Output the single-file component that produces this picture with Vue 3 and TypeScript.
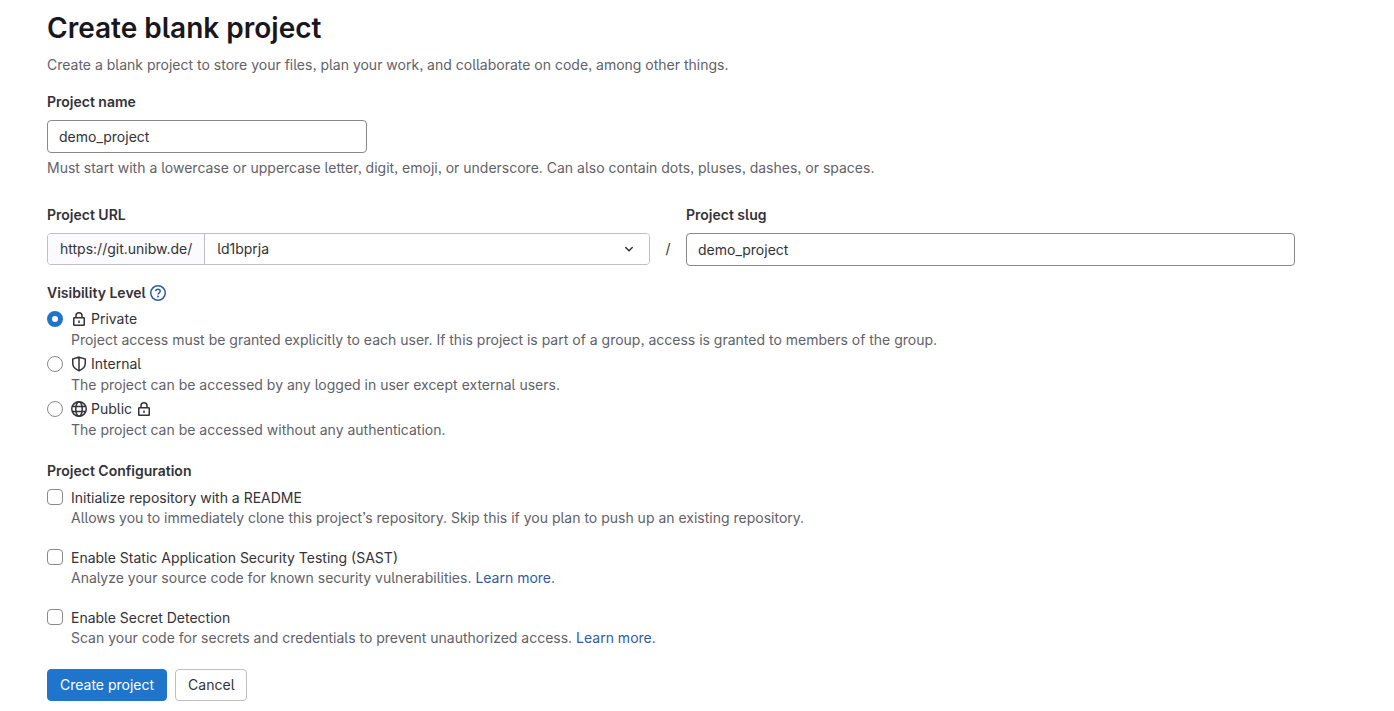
<script setup lang="ts">
import { ref } from 'vue'

interface VisibilityLevel {
  value: string
  label: string
  help: string
  locked: boolean
}

interface ConfigOption {
  id: string
  label: string
  help: string
  link: boolean
}

const projectName = ref('demo_project')
const projectSlug = ref('demo_project')
const namespace = ref('ld1bprja')
const visibility = ref('private')
const selectedOptions = ref<string[]>([])

const levels: VisibilityLevel[] = [
  {
    value: 'private',
    label: 'Private',
    help: 'Project access must be granted explicitly to each user. If this project is part of a group, access is granted to members of the group.',
    locked: false,
  },
  {
    value: 'internal',
    label: 'Internal',
    help: 'The project can be accessed by any logged in user except external users.',
    locked: false,
  },
  {
    value: 'public',
    label: 'Public',
    help: 'The project can be accessed without any authentication.',
    locked: true,
  },
]

const options: ConfigOption[] = [
  {
    id: 'readme',
    label: 'Initialize repository with a README',
    help: 'Allows you to immediately clone this project’s repository. Skip this if you plan to push up an existing repository.',
    link: false,
  },
  {
    id: 'sast',
    label: 'Enable Static Application Security Testing (SAST)',
    help: 'Analyze your source code for known security vulnerabilities.',
    link: true,
  },
  {
    id: 'secrets',
    label: 'Enable Secret Detection',
    help: 'Scan your code for secrets and credentials to prevent unauthorized access.',
    link: true,
  },
]
</script>

<template>
  <main class="page">
    <h1 class="title">Create blank project</h1>
    <p class="intro">Create a blank project to store your files, plan your work, and collaborate on code, among other things.</p>

    <form @submit.prevent>
      <div class="name-group">
        <label class="label" for="project-name">Project name</label>
        <input id="project-name" v-model="projectName" class="text-input name-input" type="text" />
        <p class="hint">Must start with a lowercase or uppercase letter, digit, emoji, or underscore. Can also contain dots, pluses, dashes, or spaces.</p>
      </div>

      <div class="path-row">
        <div>
          <label class="label" for="namespace">Project URL</label>
          <div class="url-group">
            <span class="url-prefix">https://git.unibw.de/</span>
            <div class="select-wrap">
              <select id="namespace" v-model="namespace" class="namespace">
                <option value="ld1bprja">ld1bprja</option>
              </select>
              <svg class="chevron" viewBox="0 0 16 16" aria-hidden="true">
                <path d="M4.75 6.5 8 9.750l3.250-3.250" fill="none" stroke="currentColor" stroke-width="1.500" stroke-linecap="round" stroke-linejoin="round" />
              </svg>
            </div>
          </div>
        </div>
        <span class="slash">/</span>
        <div>
          <label class="label" for="project-slug">Project slug</label>
          <input id="project-slug" v-model="projectSlug" class="text-input" type="text" />
        </div>
      </div>

      <fieldset class="levels">
        <legend class="legend">
          Visibility Level
          <a href="#visibility" class="help-link" aria-label="Help">
            <svg class="icon" viewBox="0 0 16 16" fill="none" stroke="currentColor" stroke-width="1.500">
              <circle cx="8" cy="8" r="7.250" />
              <path d="M5.800 6.300C5.800 5 6.800 4.300 8 4.300s2.200.800 2.200 2C10.200 7.800 8 7.900 8 9.600" />
              <circle cx="8" cy="11.600" r="1" fill="currentColor" stroke="none" />
            </svg>
          </a>
        </legend>
        <div v-for="level in levels" :key="level.value" class="choice">
          <input :id="level.value" v-model="visibility" class="radio" type="radio" name="visibility" :value="level.value" />
          <div>
            <label class="choice-label" :for="level.value">
              <svg class="icon" viewBox="0 0 16 16" fill="none" stroke="currentColor" stroke-width="1.500" aria-hidden="true">
                <template v-if="level.value === 'private'">
                  <rect x="2.750" y="6.750" width="10.500" height="7.500" rx="0.500" />
                  <path d="M5 6.500V4.750a3 3 0 0 1 6 0V6.500M8 9.500v2.500" />
                </template>
                <template v-else-if="level.value === 'internal'">
                  <path d="M8 1.100 14.250 3v4.600c0 3.400-2.650 5.700-6.250 7.300-3.600-1.600-6.250-3.900-6.250-7.300V3zM8 1.500v13" />
                </template>
                <template v-else>
                  <circle cx="8" cy="8" r="7.250" />
                  <ellipse cx="8" cy="8" rx="3.250" ry="7.250" />
                  <path d="M1.500 5.500h13M1.500 10.500h13" />
                </template>
              </svg>
              <span>{{ level.label }}</span>
              <svg v-if="level.locked" class="icon" viewBox="0 0 16 16" fill="none" stroke="currentColor" stroke-width="1.500" aria-hidden="true">
                <rect x="2.750" y="6.750" width="10.500" height="7.500" rx="0.500" />
                <path d="M5 6.500V4.750a3 3 0 0 1 6 0V6.500M8 9.500v2.500" />
              </svg>
            </label>
            <p class="help">{{ level.help }}</p>
          </div>
        </div>
      </fieldset>

      <fieldset class="configuration">
        <legend class="legend">Project Configuration</legend>
        <div v-for="option in options" :key="option.id" class="choice">
          <input :id="option.id" v-model="selectedOptions" class="checkbox" type="checkbox" :value="option.id" />
          <div>
            <label class="choice-label" :for="option.id">{{ option.label }}</label>
            <p class="help">
              {{ option.help }}
              <a v-if="option.link" :href="'#' + option.id">Learn more.</a>
            </p>
          </div>
        </div>
      </fieldset>

      <div class="actions">
        <button class="button primary" type="submit">Create project</button>
        <button class="button" type="button">Cancel</button>
      </div>
    </form>
  </main>
</template>

<style>
body {
  background: #fff;
}
</style>

<style scoped>
.page {
  box-sizing: border-box;
  padding: 10px 99px 10px 47px;
  color: #333238;
  font-family: Inter, "Noto Sans", sans-serif;
  font-feature-settings: "cv05", "ss03";
  font-size: 14px;
  line-height: 20px;
}

.title {
  margin: 0 0 9px;
  color: #18171d;
  font-size: 28px;
  font-weight: 600;
  line-height: 36px;
}

p {
  margin: 0;
}

.intro,
.hint,
.help {
  color: #626168;
}

.intro {
  margin-bottom: 17px;
}

.label {
  display: block;
  margin-bottom: 8px;
  font-weight: 600;
}

.text-input {
  display: block;
  box-sizing: border-box;
  width: 100%;
  height: 33px;
  padding: 0 11px;
  border: 1px solid #89888d;
  border-radius: 4px;
  background: #fff;
  color: #333238;
  font: inherit;
  font-feature-settings: inherit;
}

.name-input {
  max-width: 320px;
}

.hint {
  margin-top: 5px;
}

.name-group {
  margin-bottom: 27px;
}

.path-row {
  display: grid;
  grid-template-columns: 603fr 36px 609fr;
  margin-bottom: 17px;
}

.url-group {
  display: flex;
  height: 32px;
  box-sizing: border-box;
  border: 1px solid #bfbfc3;
  border-radius: 4px;
  overflow: hidden;
}

.url-prefix {
  padding: 5px 12px;
  border-right: 1px solid #bfbfc3;
  background: #fbfafd;
}

.select-wrap {
  position: relative;
  flex: 1;
}

.namespace {
  width: 100%;
  height: 100%;
  padding: 0 36px 0 12px;
  border: 0;
  background: #fff;
  color: #333238;
  appearance: none;
  font: inherit;
  font-feature-settings: inherit;
}

.chevron {
  position: absolute;
  top: 7px;
  right: 12px;
  width: 16px;
  height: 16px;
  pointer-events: none;
}

.slash {
  align-self: end;
  padding-bottom: 7px;
  text-align: center;
}

fieldset {
  min-width: 0;
  margin: 0;
  padding: 0;
  border: 0;
}

.legend {
  display: flex;
  align-items: center;
  gap: 4px;
  margin-bottom: 6px;
  padding: 0;
  font-weight: 600;
}

.help-link {
  display: flex;
}

.icon {
  display: block;
  flex: none;
  width: 16px;
  height: 16px;
}

.choice {
  display: flex;
  gap: 8px;
}

.choice-label {
  display: flex;
  align-items: center;
  gap: 4px;
}

.levels {
  margin-bottom: 21px;
}

.levels .choice + .choice {
  margin-top: 4px;
}

.levels .help {
  padding-top: 1px;
}

.configuration .choice {
  margin-bottom: 20px;
}

.configuration .legend {
  margin-bottom: 7px;
}

.radio,
.checkbox {
  box-sizing: border-box;
  flex: none;
  width: 16px;
  height: 16px;
  margin: 1px 0 0;
  border: 1px solid #89888d;
  background: #fff;
  appearance: none;
}

.radio {
  margin-top: 2px;
  border-radius: 50%;
}

.checkbox {
  border-radius: 4px;
}

.radio:checked {
  border: 5px solid #1f75cb;
}

.checkbox:checked {
  border-color: #1f75cb;
  background: #1f75cb;
}

a {
  color: #2f5ca0;
  text-decoration: none;
}

.actions {
  display: flex;
  gap: 8px;
  padding-top: 1px;
}

.button {
  box-sizing: border-box;
  height: 32px;
  padding: 0 12px;
  border: 1px solid #bfbfc3;
  border-radius: 4px;
  background: #fff;
  color: #333238;
  font: inherit;
  font-feature-settings: inherit;
}

.primary {
  border-color: #1f75cb;
  background: #1f75cb;
  color: #fff;
}
</style>
